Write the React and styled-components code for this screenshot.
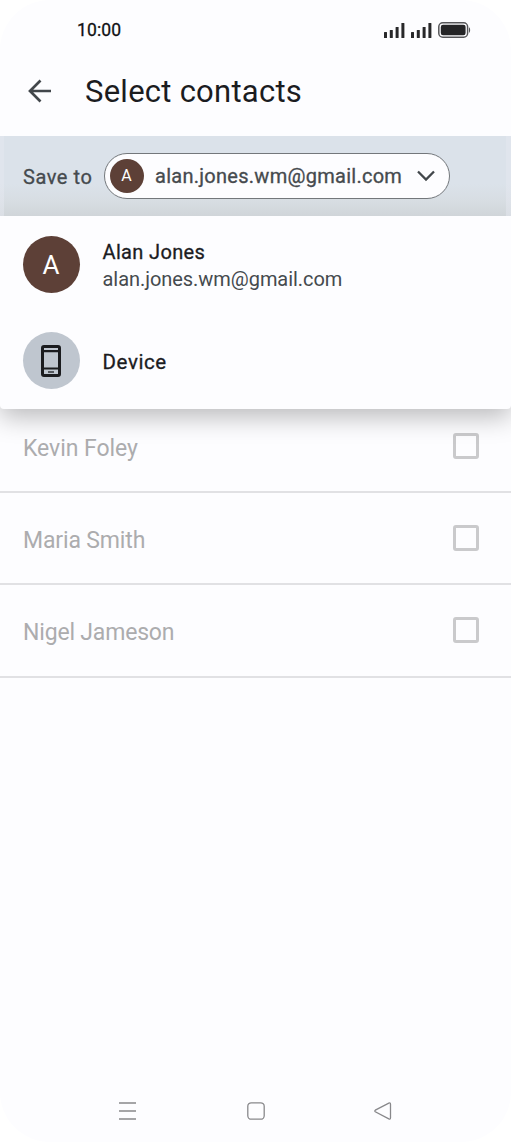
import styled, { createGlobalStyle } from "styled-components";

const GlobalStyle = createGlobalStyle`
    * {
        box-sizing: border-box;
    }
    body {
        margin: 0;
        background: #ffffff;
        font-family: Roboto, "Liberation Sans", sans-serif;
    }
`;

const Screen = styled.div`
    display: flex;
    flex-direction: column;
    width: 511px;
    height: 1142px;
    overflow: hidden;
    border-radius: 50px;
    background: #fdfdff;
`;

const Label = styled.span`
    font-size: ${(props) => props.$size}px;
    font-weight: 400;
    letter-spacing: ${(props) => props.$spacing || 0}px;
    line-height: ${(props) => props.$line || 28}px;
    color: ${(props) => props.$color || "#1b1c1f"};
    -webkit-text-stroke: ${(props) => (props.$medium ? "0.3px" : "0")} currentColor;
    white-space: nowrap;
`;

const StatusBar = styled.header`
    display: flex;
    align-items: center;
    justify-content: space-between;
    height: 60px;
    padding: 0 40px 0 77px;
`;

const StatusIcons = styled.div`
    display: flex;
    align-items: center;
    gap: 6px;
`;

const Header = styled.div`
    display: flex;
    align-items: center;
    gap: 33px;
    height: 76px;
    padding: 0 0 14px 28px;

    ${Label} {
        padding-top: 2px;
    }
`;

const SaveBar = styled.div`
    display: flex;
    align-items: center;
    gap: 11px;
    height: 80px;
    padding-left: 23px;
    background:
        linear-gradient(to right, #e5e8f080 4px, transparent 4px 506px, #e5e8f080 506px),
        linear-gradient(#dbe2ea 60%, #d7dde2 82%, #d0d5d9);
`;

const SaveLabel = styled.div`
    width: 70px;
    padding-top: 2px;
`;

const AccountPill = styled.button`
    display: flex;
    align-items: center;
    width: 346px;
    height: 46px;
    margin-bottom: 1px;
    padding: 0 14px 0 4.5px;
    border: 1.5px solid #73777b;
    border-radius: 23px;
    background: #fdfdff;
    font-family: inherit;
`;

const PillText = styled.div`
    flex: 1;
    margin-left: 11.5px;
    text-align: left;
`;

const Avatar = styled.div`
    display: flex;
    align-items: center;
    justify-content: center;
    flex: none;
    width: ${(props) => props.$size}px;
    height: ${(props) => props.$size}px;
    border-radius: 50%;
    background: ${(props) => props.$background || "#5d4037"};

    ${Label} {
        padding-top: ${(props) => (props.$size > 40 ? 2 : 1)}px;
    }
`;

const Menu = styled.div`
    position: relative;
    z-index: 1;
    height: 193px;
    border-radius: 0 0 4px 4px;
    background: #fdfdff;
    box-shadow: 0 8px 26px rgba(0, 0, 0, 0.27);
    clip-path: inset(0 0 -50px 0);
`;

const MenuItem = styled.div`
    display: flex;
    align-items: center;
    gap: 23px;
    height: 96.5px;
    padding-left: 22.5px;
`;

const MenuText = styled.div`
    display: flex;
    flex-direction: column;
    padding-top: ${(props) => props.$top}px;
`;

const ContactRow = styled.div`
    display: flex;
    align-items: center;
    justify-content: space-between;
    height: ${(props) => (props.$first ? 84 : 92.3)}px;
    padding: 0 32.5px ${(props) => (props.$first ? 9 : 0)}px 23px;
    border-bottom: 2px solid #e1e1e4;

    ${Label} {
        padding-top: 6px;
    }
`;

const Checkbox = styled.span`
    width: 26px;
    height: 26px;
    border: 3px solid #cacacc;
    border-radius: 3px;
`;

const NavBar = styled.nav`
    display: flex;
    align-items: center;
    justify-content: space-between;
    margin-top: auto;
    height: 62px;
    padding: 0 119px 0 118px;
`;

const Signal = () => (
    <svg width="21" height="15" viewBox="0 0 21 15" fill="#28282a">
        <rect x="0" y="9" width="3" height="6" rx="0.5" />
        <rect x="5.8" y="7" width="3" height="8" rx="0.5" />
        <rect x="11.6" y="4" width="3" height="11" rx="0.5" />
        <rect x="17.4" y="0" width="3" height="15" rx="0.5" />
    </svg>
);

const Battery = () => (
    <svg width="33" height="16" viewBox="0 0 33 16">
        <rect x="0.8" y="0.8" width="28.8" height="14.4" rx="4" fill="none" stroke="#555558" strokeWidth="1.5" />
        <rect x="2.8" y="2.8" width="24.8" height="10.4" rx="2.2" fill="#252527" />
        <path d="M31 5.2c1.5.8 1.5 4.8 0 5.6z" fill="#555558" />
    </svg>
);

const BackArrow = () => (
    <svg width="24" height="24" viewBox="0 0 24 24" fill="none" stroke="#42474b" strokeWidth="2.7">
        <path d="M23 12H2M12.5 1.5L2 12l10.5 10.5" />
    </svg>
);

const Chevron = () => (
    <svg width="18" height="12" viewBox="0 0 18 12" fill="none" stroke="#42474b" strokeWidth="2.3">
        <path d="M1 1.5l8 8 8-8" />
    </svg>
);

const Phone = () => (
    <svg width="20" height="32" viewBox="0 0 20 32" fill="none" stroke="#1b1c1f">
        <rect x="1.5" y="1.5" width="17" height="29" rx="1.5" strokeWidth="3" />
        <path d="M2 6.2h16M2 23.5h16" strokeWidth="2.2" />
        <path d="M7 27h6" strokeWidth="1.3" />
    </svg>
);

const contacts = [
    { name: "Kevin Foley", spacing: -0.05 },
    { name: "Maria Smith", spacing: -0.15 },
    { name: "Nigel Jameson", spacing: -0.18 },
];

export default function App() {
    return (
        <>
            <GlobalStyle />
            <Screen>
                <StatusBar>
                    <Label $size={17.5} $medium $spacing={0.15} $color="#111113">10:00</Label>
                    <StatusIcons>
                        <Signal />
                        <Signal />
                        <Battery />
                    </StatusIcons>
                </StatusBar>
                <Header>
                    <BackArrow />
                    <Label $size={31} $line={40} $spacing={0.25}>Select contacts</Label>
                </Header>
                <SaveBar>
                    <SaveLabel>
                        <Label $size={20} $medium $spacing={0.55} $color="#454a4e">Save to</Label>
                    </SaveLabel>
                    <AccountPill>
                        <Avatar $size={34}>
                            <Label $size={16} $color="#fff">A</Label>
                        </Avatar>
                        <PillText>
                            <Label $size={20} $medium $spacing={0.27} $color="#454a4e">alan.jones.wm@gmail.com</Label>
                        </PillText>
                        <Chevron />
                    </AccountPill>
                </SaveBar>
                <Menu>
                    <MenuItem>
                        <Avatar $size={57}>
                            <Label $size={26} $color="#fff">A</Label>
                        </Avatar>
                        <MenuText $top={4}>
                            <Label $size={20} $medium $spacing={0.35} $line={27}>Alan Jones</Label>
                            <Label $size={20} $spacing={-0.05} $line={27} $color="#454a4e">alan.jones.wm@gmail.com</Label>
                        </MenuText>
                    </MenuItem>
                    <MenuItem>
                        <Avatar $size={57} $background="#bfc6cf">
                            <Phone />
                        </Avatar>
                        <MenuText $top={2}>
                            <Label $size={20.5} $medium $spacing={0.6}>Device</Label>
                        </MenuText>
                    </MenuItem>
                </Menu>
                {contacts.map(({ name, spacing }, i) => (
                    <ContactRow key={name} $first={i === 0}>
                        <Label $size={23} $color="#acacae" $spacing={spacing}>{name}</Label>
                        <Checkbox />
                    </ContactRow>
                ))}
                <NavBar>
                    <svg width="19" height="18" viewBox="0 0 19 18" stroke="#88888b" strokeWidth="1.6">
                        <path d="M1 1h17M1 9h17M1 17h17" />
                    </svg>
                    <svg width="18" height="18" viewBox="0 0 18 18" fill="none" stroke="#88888b" strokeWidth="1.3">
                        <rect x="0.8" y="0.8" width="16.4" height="16.4" rx="3.5" />
                    </svg>
                    <svg width="18" height="18" viewBox="0 0 18 18" fill="none" stroke="#88888b" strokeWidth="1.3">
                        <path d="M1.3 8.2L14.8 1.1Q16.5.5 16.5 2.2v13.6q0 1.7-1.7 1.1L1.3 9.8Q.4 9 1.3 8.2z" />
                    </svg>
                </NavBar>
            </Screen>
        </>
    );
}
